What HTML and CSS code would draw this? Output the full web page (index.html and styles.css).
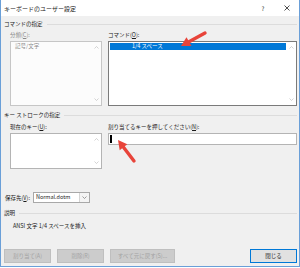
FILE: index.html
```html
<!DOCTYPE html>
<html lang="ja">
<head>
  <meta charset="UTF-8">
  <title>キーボードのユーザー設定</title>
  <link rel="stylesheet" href="styles.css">
</head>
<body>

  <div class="window">
    <div class="titlebar">
      <span class="title">キーボードのユーザー設定</span>
      <span class="caption-btn">?</span>
      <span class="caption-btn">
        <svg width="6" height="6" viewBox="0 0 6 6"><path d="M0.5 0.5 L5.5 5.5 M5.5 0.5 L0.5 5.5" stroke="#222" stroke-width="0.8"/></svg>
      </span>
    </div>

    <div class="content">
      <div class="legend">コマンドの指定</div>

      <div class="columns">
        <div class="field">
          <label class="disabled">分類(<u>C</u>):</label>
          <div class="listbox tall disabled-box">
            <div class="items">
              <div class="item disabled">記号/文字</div>
            </div>
            <div class="scrollbar">
              <svg width="5" height="3" viewBox="0 0 5 3"><polyline points="0.5,2.5 2.5,0.5 4.5,2.5" fill="none" stroke="#c2c2c2" stroke-width="0.7"/></svg>
              <svg width="5" height="3" viewBox="0 0 5 3"><polyline points="0.5,0.5 2.5,2.5 4.5,0.5" fill="none" stroke="#c2c2c2" stroke-width="0.7"/></svg>
            </div>
          </div>
        </div>
        <div class="field">
          <label>コマンド(<u>O</u>):</label>
          <div class="listbox tall">
            <div class="items">
              <div class="item selected">1/4 スペース</div>
            </div>
            <div class="scrollbar">
              <svg width="5" height="3" viewBox="0 0 5 3"><polyline points="0.5,2.5 2.5,0.5 4.5,2.5" fill="none" stroke="#c2c2c2" stroke-width="0.7"/></svg>
              <svg width="5" height="3" viewBox="0 0 5 3"><polyline points="0.5,0.5 2.5,2.5 4.5,0.5" fill="none" stroke="#c2c2c2" stroke-width="0.7"/></svg>
            </div>
          </div>
        </div>
      </div>

      <div class="legend second">キー ストロークの指定</div>

      <div class="columns keys">
        <div class="field">
          <label>現在のキー(<u>U</u>):</label>
          <div class="listbox short">
            <div class="items"></div>
            <div class="scrollbar">
              <svg width="5" height="3" viewBox="0 0 5 3"><polyline points="0.5,2.5 2.5,0.5 4.5,2.5" fill="none" stroke="#c2c2c2" stroke-width="0.7"/></svg>
              <svg width="5" height="3" viewBox="0 0 5 3"><polyline points="0.5,0.5 2.5,2.5 4.5,0.5" fill="none" stroke="#c2c2c2" stroke-width="0.7"/></svg>
            </div>
          </div>
        </div>
        <div class="field">
          <label>割り当てるキーを押してください(<u>N</u>):</label>
          <div class="textbox"><span class="caret"></span></div>
        </div>
      </div>

      <div class="save-row">
        <label>保存先(<u>V</u>):</label>
        <div class="combo">
          <span class="combo-value">Normal.dotm</span>
          <span class="combo-btn">
            <svg width="5" height="3" viewBox="0 0 5 3"><polyline points="0.5,0.5 2.5,2.5 4.5,0.5" fill="none" stroke="#777" stroke-width="0.7"/></svg>
          </span>
        </div>
      </div>

      <div class="legend third">説明</div>
      <div class="description">ANSI 文字 1/4 スペースを挿入</div>

      <div class="buttons">
        <button class="btn" disabled>割り当て(A)</button>
        <button class="btn" disabled>削除(R)</button>
        <button class="btn wide" disabled>すべて元に戻す(S)...</button>
        <button class="btn default">閉じる</button>
      </div>
    </div>

    <!-- callout arrows drawn over the dialog -->
    <svg class="callouts" width="300" height="268" viewBox="0 0 300 268">
      <line x1="205" y1="33" x2="189" y2="41.7" stroke="#e8443a" stroke-width="3.4" stroke-linecap="round"/>
      <polygon points="181,46 191.5,46 186.5,37.2" fill="#e8443a"/>
      <line x1="134" y1="161" x2="123.5" y2="147.2" stroke="#e8443a" stroke-width="3.4" stroke-linecap="round"/>
      <polygon points="118,140 127.3,144.2 119.7,150.2" fill="#e8443a"/>
    </svg>
  </div>

</body>
</html>
```

FILE: styles.css
```css
body {
  margin: 0;
  padding: 0;
  background: #ffffff;
  font-family: 'Noto Sans CJK JP', sans-serif;
  font-size: 5.5px;
  color: #1a1a1a;
}

.window {
  position: relative;
  width: 300px;
  height: 267px;
  box-sizing: border-box;
  background: #f0f0f0;
  border: 1px solid #6a9fd8;
  border-top: none;
}

.titlebar {
  display: flex;
  align-items: center;
  height: 16px;
  padding-left: 3px;
  background: #ffffff;
  font-size: 6px;
}

.title {
  flex: 1;
}

.caption-btn {
  width: 24px;
  text-align: center;
  display: flex;
  justify-content: center;
  align-items: center;
}

.content {
  padding: 0 2px 0 3px;
}

u {
  text-decoration: underline;
}

.legend {
  display: flex;
  align-items: center;
  gap: 4px;
  height: 8px;
  margin-top: 4px;
}

.legend::after {
  content: "";
  flex: 1;
  border-top: 1px solid #dcdcdc;
}

.legend.second {
  margin-top: 5px;
}

.legend.third {
  margin-top: 6px;
}

.columns {
  display: grid;
  grid-template-columns: 92px 1fr;
  gap: 6px;
  padding-left: 6px;
  margin-top: 3px;
}

.columns.keys {
  margin-top: 4px;
}

.field label {
  display: block;
  height: 8px;
  line-height: 8px;
  margin-bottom: 2px;
}

.disabled {
  color: #8a8a8a;
}

.listbox {
  display: flex;
  box-sizing: border-box;
  background: #ffffff;
  border: 1px solid #7a7a7a;
}

.listbox.disabled-box {
  border-color: #c6c6c6;
  background: #fcfcfc;
}

.listbox.tall {
  height: 65px;
}

.listbox.short {
  height: 36px;
  border-color: #b4b4b4;
}

.items {
  flex: 1;
  padding: 1px;
}

.item {
  height: 7px;
  line-height: 7px;
  padding-left: 3px;
}

.item.selected {
  background: #0078d7;
  color: #ffffff;
  padding-left: 22px;
}

.scrollbar {
  width: 9px;
  display: flex;
  flex-direction: column;
  justify-content: space-between;
  align-items: center;
  padding: 4px 0;
}

.textbox {
  height: 12px;
  box-sizing: border-box;
  background: #ffffff;
  border: 1px solid #b4b4b4;
  display: flex;
  align-items: center;
  padding-left: 1px;
}

.caret {
  width: 2px;
  height: 8px;
  background: #000000;
}

.save-row {
  display: flex;
  align-items: center;
  gap: 3px;
  margin-top: 23px;
  padding-left: 1px;
}

.combo {
  display: flex;
  width: 57px;
  height: 11px;
  box-sizing: border-box;
  border: 1px solid #a8a8a8;
  background: #ffffff;
}

.combo-value {
  flex: 1;
  line-height: 9px;
  padding-left: 2px;
}

.combo-btn {
  width: 9px;
  border-left: 1px solid #d4d4d4;
  background: #f4f4f4;
  display: flex;
  justify-content: center;
  align-items: center;
}

.description {
  height: 8px;
  line-height: 8px;
  margin-top: 5px;
  padding-left: 9px;
}

.buttons {
  display: flex;
  gap: 6px;
  margin-top: 19px;
}

.btn {
  width: 47px;
  height: 14px;
  padding: 0;
  font-family: 'Noto Sans CJK JP', sans-serif;
  font-size: 5.5px;
  color: #1a1a1a;
  background: #e1e1e1;
  border: 1px solid #adadad;
}

.btn:disabled {
  color: #a3a3a3;
  background: #cccccc;
  border-color: #bfbfbf;
}

.btn.wide {
  width: 65px;
}

.btn.default {
  margin-left: auto;
  border-color: #0078d7;
}

.callouts {
  position: absolute;
  left: -1px;
  top: 0;
  pointer-events: none;
}
```
